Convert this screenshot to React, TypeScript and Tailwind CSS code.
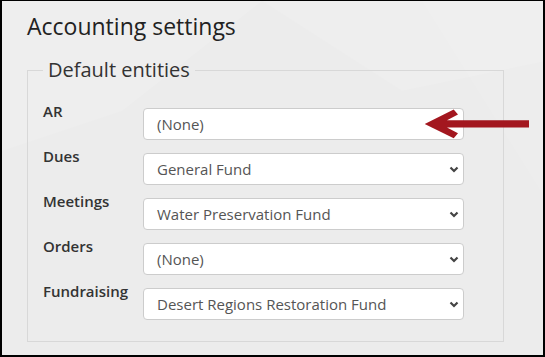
import React from 'react';

const rows = [
  { label: 'AR', value: '(None)', select: false },
  { label: 'Dues', value: 'General Fund', select: true },
  { label: 'Meetings', value: 'Water Preservation Fund', select: true },
  { label: 'Orders', value: '(None)', select: true },
  { label: 'Fundraising', value: 'Desert Regions Restoration Fund', select: true },
];

function Chevron() {
  return (
    <svg width="10" height="7" viewBox="0 0 10 7" className="shrink-0">
      <path d="M1.5 1.5 L5 5 L8.5 1.5" fill="none" stroke="#444" strokeWidth={2.2} />
    </svg>
  );
}

export default function App() {
  return (
    <div
      className="relative w-[545px] h-[357px] overflow-hidden border border-b-2 border-r-2 border-l-2 border-black bg-[#ececec] text-[#333]"
      style={{ fontFamily: '"Open Sans", "Liberation Sans", sans-serif' }}
    >
      {/* faint background facets */}
      <svg className="absolute inset-0 pointer-events-none" width="545" height="357">
        <polygon points="0,0 260,0 120,110 0,150" fill="#ffffff" opacity="0.12" />
        <polygon points="260,0 545,0 545,60 400,90" fill="#ffffff" opacity="0.1" />
        <polygon points="420,0 545,0 545,200" fill="#ffffff" opacity="0.08" />
      </svg>

      <div className="relative pl-[25px] pt-[10px]">
        <h1 className="text-[23px] leading-[30px] text-[#222]">Accounting settings</h1>

        <fieldset className="mt-[17px] w-[477px] border border-[#d8d8d8] pl-[15px] pr-[39px] pt-[26px] pb-[21px]">
          <legend className="px-[5px] text-[20px] leading-[24px] text-[#333]">Default entities</legend>
          <div className="flex flex-col gap-[13px]">
            {rows.map((r) => (
              <div key={r.label} className="flex">
                <div className="w-[100px] -mt-1 text-[15px] leading-none font-semibold text-[#333]">{r.label}</div>
                <div className="flex items-center justify-between w-[321px] h-[32px] pl-[13px] pr-[4px] bg-white border border-[#cccccc] rounded-[4px] text-[15px] text-[#555] pt-[1px]">
                  <span>{r.value}</span>
                  {r.select && <Chevron />}
                </div>
              </div>
            ))}
          </div>
        </fieldset>
      </div>

      {/* pointer arrow */}
      <svg className="absolute left-[420px] top-[104px]" width="110" height="36" viewBox="0 0 110 36">
        <polygon
          points="2.7,18.9 31.7,4.5 36,9.5 25,15.2 107,15.2 107,22.6 25,22.6 36,28.3 31.7,33.3"
          fill="#a3171f"
        />
      </svg>
    </div>
  );
}
